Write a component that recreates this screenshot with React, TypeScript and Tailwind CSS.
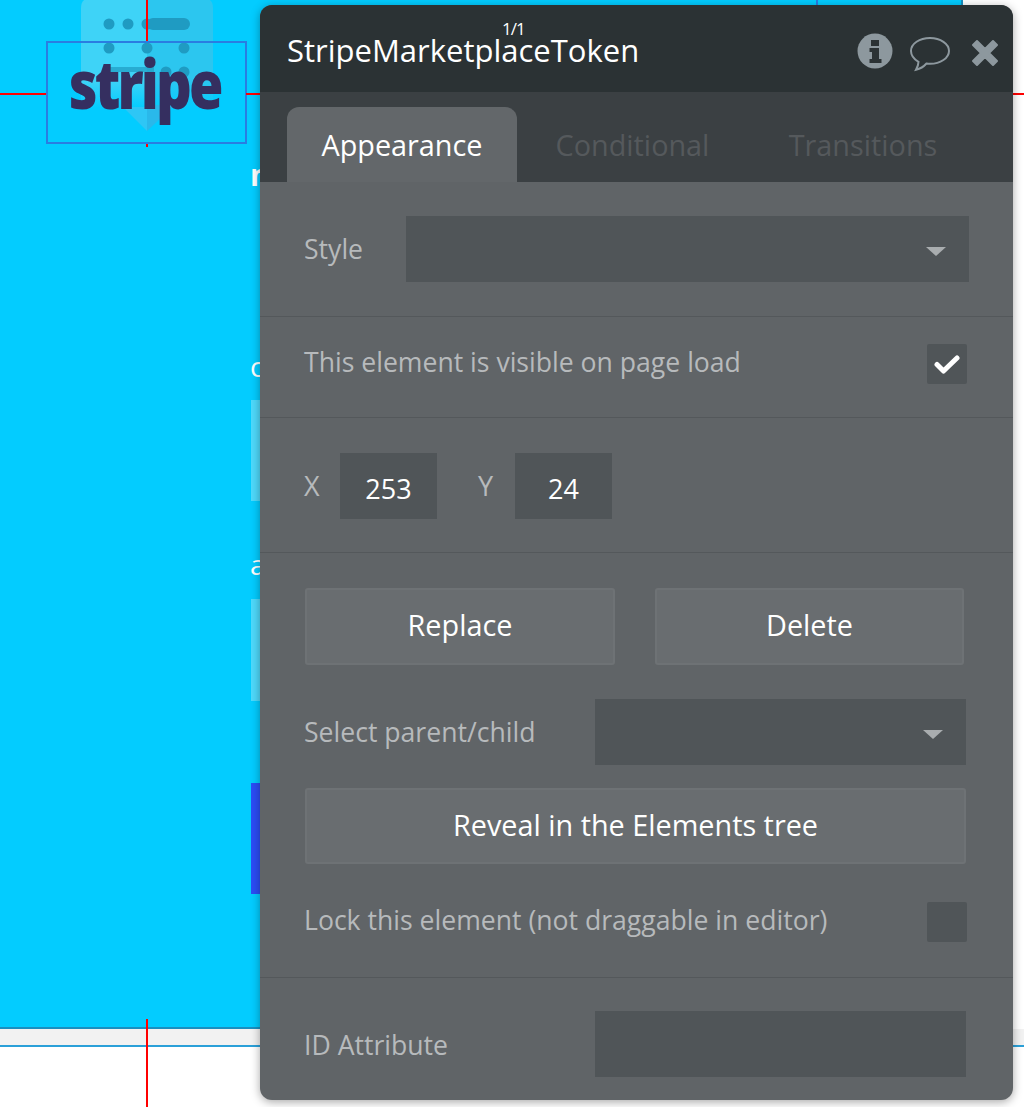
import React from "react";

const font = { fontFamily: '"Open Sans", sans-serif' };

function Caret() {
  return <span className="mt-[5px] block h-0 w-0 border-x-[10px] border-t-[9px] border-x-transparent border-t-[#a9adaf]" />;
}

function Select({ className }: { className: string }) {
  return (
    <div className={`flex h-[66px] items-center justify-end bg-[#505558] pr-[23px] ${className}`}>
      <Caret />
    </div>
  );
}

function Btn({ label, className }: { label: string; className: string }) {
  return (
    <div className={`flex items-center justify-center rounded-[3px] border-2 border-[#6e7275] bg-[#696d70] text-[28.8px] text-white ${className}`}>
      {label}
    </div>
  );
}

function StripeArt() {
  return (
    <svg className="absolute left-[81px] top-0" width="132" height="132" viewBox="0 0 132 132">
      <defs>
        <linearGradient id="cardLeft" x1="0" y1="0" x2="0" y2="1">
          <stop offset="0.75" stopColor="#3ed3f7" />
          <stop offset="1" stopColor="#3ed3f7" stopOpacity="0" />
        </linearGradient>
        <linearGradient id="cardRight" x1="0" y1="0" x2="0" y2="1">
          <stop offset="0.75" stopColor="#2cc6ef" />
          <stop offset="1" stopColor="#2cc6ef" stopOpacity="0" />
        </linearGradient>
      </defs>
      <path d="M10 -2H66V108H0V8Q0 -2 10 -2Z" fill="url(#cardLeft)" />
      <path d="M66 -2H122Q132 -2 132 8V108H66Z" fill="url(#cardRight)" />
      <path d="M42 107H66V131Z" fill="#2ec6f5" />
      <path d="M66 105H94L66 131Z" fill="#2ab8ea" />
      <g fill="#1f9bc2">
        <circle cx="28" cy="24" r="5.500" />
        <circle cx="47" cy="24" r="5.500" />
        <circle cx="66" cy="24" r="5.500" />
        <rect x="66" y="18" width="43" height="12" rx="6" />
        <circle cx="28" cy="48" r="5.500" />
        <circle cx="66" cy="48" r="5.500" />
        <circle cx="103" cy="48" r="5.500" />
        <circle cx="85" cy="72" r="5.500" />
        <circle cx="103" cy="72" r="5.500" />
        <rect x="29" y="67" width="44" height="5" opacity="0.7" />
      </g>
    </svg>
  );
}

function Canvas() {
  return (
    <div className="absolute inset-0 overflow-hidden bg-white">
      <div className="absolute left-0 top-0 h-[1029px] w-[963px] border-b-2 border-r-2 border-[#1a8fc0] bg-[#03ccff]" />
      <div className="absolute left-0 top-[1029px] h-[18px] w-full border-b-2 border-[#2ba0d8] bg-[#f2f2f2]" />
      <div className="absolute left-[816px] top-0 h-[5px] w-[2px] bg-[#2a7de1]" />
      <StripeArt />
      <div className="absolute left-[46px] top-[41px] flex h-[103px] w-[201px] items-center justify-center border-2 border-[#2a7de1]">
        <span className="relative -left-[2px] -top-[10px] scale-x-[0.82] text-[68px] font-extrabold leading-none tracking-[-3.5px] text-[#352f60]" style={font}>stripe</span>
      </div>
      <div className="absolute left-0 top-[93px] h-[2px] w-[46px] bg-[#ff0000]" />
      <div className="absolute left-[246px] top-[93px] h-[2px] w-[20px] bg-[#ff0000]" />
      <div className="absolute left-[1010px] top-[93px] h-[2px] w-[14px] bg-[#ff0000]" />
      <div className="absolute left-[146px] top-0 h-[41px] w-[2px] bg-[#ff0000]" />
      <div className="absolute left-[146px] top-[144px] h-[3px] w-[2px] bg-[#ff0000]" />
      <div className="absolute left-[146px] top-[1019px] h-[88px] w-[2px] bg-[#ff0000]" />
      <span className="absolute left-[250px] top-[155px] text-[30px] font-bold leading-[40px] text-white" style={font}>m</span>
      <span className="absolute left-[250px] top-[346px] text-[28px] leading-[40px] text-white" style={font}>c</span>
      <div className="absolute left-[251px] top-[400px] h-[101px] w-[20px] bg-[#4fd9fb]" />
      <span className="absolute left-[250px] top-[544px] text-[28px] leading-[40px] text-white" style={font}>a</span>
      <div className="absolute left-[251px] top-[599px] h-[102px] w-[20px] bg-[#4fd9fb]" />
      <div className="absolute left-[251px] top-[783px] h-[111px] w-[20px] bg-[#2b4df5]" />
    </div>
  );
}

function Panel() {
  return (
    <div
      className="absolute left-[260px] top-[5px] flex h-[1095px] w-[753px] flex-col overflow-hidden rounded-[12px] bg-[#606467] shadow-[0_2px_10px_rgba(0,0,0,0.35)]"
      style={font}
    >
      <div className="flex h-[87px] shrink-0 items-center justify-between bg-[#2b3234] pl-[27px] pr-[14px] pt-[2px]">
        <span className="text-[31px] leading-[30px] text-white">StripeMarketplaceToken</span>
        <div className="mt-[2px] flex items-center">
          <svg width="36" height="36" viewBox="0 0 36 36">
            <circle cx="18" cy="18" r="17.500" fill="#8d989e" />
            <path d="M14 7h8v6h-8zM12.500 15h9.500v11h2.500v4h-12v-4h2.500v-7h-2.500z" fill="#2b3234" />
          </svg>
          <svg className="ml-[16px] mt-[6px]" width="42" height="36" viewBox="0 0 42 36" fill="none">
            <path d="M21 2C10.500 2 2 7.700 2 15c0 4.500 3.300 8.400 7.500 10.800 0 2-.9 5-2.500 8 4-1 8-3.500 10.500-6.300 1.200.2 2.300.3 3.500.3 10.500 0 19-5.800 19-12.800S31.500 2 21 2Z" stroke="#8d989e" strokeWidth="2" />
          </svg>
          <svg className="ml-[20px] mt-[4px]" width="28" height="28" viewBox="0 0 28 28">
            <path d="M6 2 14 10 22 2 26 6 18 14 26 22 22 26 14 18 6 26 2 22 10 14 2 6Z" fill="#8d989e" stroke="#8d989e" strokeWidth="2" strokeLinejoin="round" />
          </svg>
        </div>
      </div>

      <div className="flex h-[90px] shrink-0 items-end bg-[#3b4043] pl-[27px] text-[28.8px]">
        <div className="flex h-[75px] w-[230px] items-center justify-center rounded-t-[12px] bg-[#63676a] text-white">
          Appearance
        </div>
        <div className="flex h-[75px] w-[231px] items-center justify-center text-[#55595c]">Conditional</div>
        <div className="flex h-[75px] w-[230px] items-center justify-center text-[#55595c]">Transitions</div>
      </div>

      <div className="flex h-[135px] shrink-0 items-center border-b border-[#54585b] pl-[44px] pr-[44px]">
        <span className="mt-[2px] w-[102px] text-[26.6px] text-[#b7babc]">Style</span>
        <Select className="grow" />
      </div>

      <div className="flex h-[101px] shrink-0 items-center justify-between border-b border-[#54585b] pl-[44px] pr-[46px]">
        <span className="mb-[8px] text-[26.6px] text-[#b7babc]">This element is visible on page load</span>
        <div className="mb-[6px] flex h-[40px] w-[40px] items-center justify-center rounded-[2px] bg-[#505558]">
          <svg width="26" height="20" viewBox="0 0 26 20">
            <path d="M3 10.500 9.500 17 23 4" fill="none" stroke="#fff" strokeWidth="5" strokeLinejoin="round" strokeLinecap="round" />
          </svg>
        </div>
      </div>

      <div className="flex h-[135px] shrink-0 items-center border-b border-[#54585b] pl-[44px] pt-[2px] text-[27px]">
        <span className="w-[36px] text-[#b7babc]">X</span>
        <div className="flex h-[66px] w-[97px] items-center justify-center bg-[#505558] pt-[6px] text-white">253</div>
        <span className="ml-[41px] w-[37px] text-[#b7babc]">Y</span>
        <div className="flex h-[66px] w-[97px] items-center justify-center bg-[#505558] pt-[6px] text-white">24</div>
      </div>

      <div className="flex grow flex-col pl-[45px] pr-[47px] pt-[35px]">
        <div className="flex justify-between">
          <Btn label="Replace" className="h-[77px] w-[310px] pb-[4px]" />
          <Btn label="Delete" className="mr-[2px] h-[77px] w-[309px] pb-[4px]" />
        </div>
        <div className="mt-[34px] flex items-center justify-between">
          <span className="-ml-[1px] mt-[2px] text-[26.6px] text-[#b7babc]">Select parent/child</span>
          <Select className="w-[371px]" />
        </div>
        <Btn label="Reveal in the Elements tree" className="mt-[23px] h-[76px] w-full pb-[2px]" />
        <div className="mt-[37px] flex items-center justify-between">
          <span className="-ml-[1px] mb-[2px] text-[26.6px] text-[#b7babc]">Lock this element (not draggable in editor)</span>
          <div className="-mr-[1px] h-[40px] w-[40px] rounded-[2px] bg-[#505558]" />
        </div>
      </div>

      <div className="flex h-[123px] shrink-0 items-start justify-between border-t border-[#54585b] pl-[44px] pr-[47px] pt-[33px]">
        <span className="mt-[1px] text-[26.6px] leading-[66px] text-[#b7babc]">ID Attribute</span>
        <div className="h-[66px] w-[371px] bg-[#505558]" />
      </div>
    </div>
  );
}

export default function App() {
  return (
    <div className="relative h-[1107px] w-[1024px] overflow-hidden bg-white">
      <Canvas />
      <Panel />
      <span className="absolute left-[502px] top-[18px] text-[17px] leading-[22px] tracking-[-1px] text-white" style={font}>1/1</span>
    </div>
  );
}
